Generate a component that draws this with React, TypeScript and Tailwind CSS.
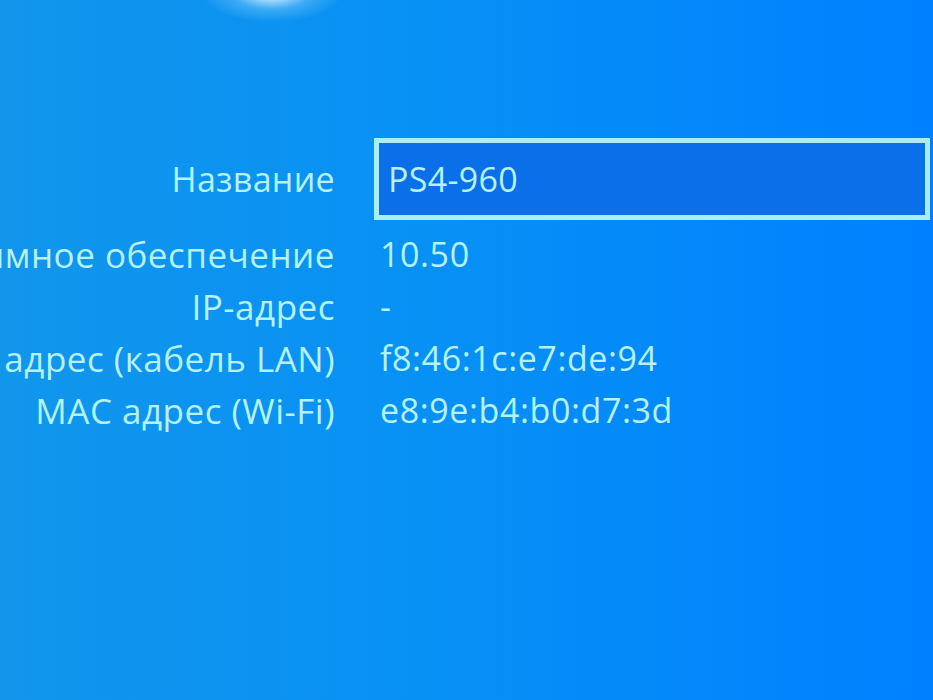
const rows = [
  { label: "Системное программное обеспечение", value: "10.50" },
  { label: "IP-адрес", value: "-" },
  { label: "MAC адрес (кабель LAN)", value: "f8:46:1c:e7:de:94" },
  { label: "MAC адрес (Wi-Fi)", value: "e8:9e:b4:b0:d7:3d" },
];

export default function App() {
  return (
    <div
      className="w-[933px] h-[700px] overflow-hidden text-[#b4f2f6] leading-none bg-[radial-gradient(ellipse_70px_28px_at_272px_-6px,rgba(240,252,255,0.95),rgba(150,215,250,0.35)_55%,rgba(0,0,0,0)_100%),linear-gradient(to_right,#1296ec_0%,#0891f5_45%,#0080ff_100%)]"
      style={{ fontFamily: '"Open Sans", "Noto Sans", sans-serif' }}
    >
      <div className="pt-[138px] flex flex-col">
        {/* selected row */}
        <div className="flex h-[82px]">
          <div className="w-[335px] shrink-0 flex justify-end items-center whitespace-nowrap text-[34px] tracking-[0.3px]">
            Название
          </div>
          <div className="ml-[39px] w-[556px] shrink-0 flex items-center border-[5px] border-[#a7eff4] bg-[#0a6fe8] pl-[9px] text-[34px] tracking-[0.3px]">
            PS4-960
          </div>
        </div>
        <div className="mt-[8px] flex flex-col">
          {rows.map((r) => (
            <div key={r.label} className="flex h-[52px]">
              <div className="w-[335px] shrink-0 flex justify-end items-center whitespace-nowrap text-[35px] tracking-[0.5px]">
                {r.label}
              </div>
              <div className="ml-[45px] flex items-center whitespace-nowrap text-[34px] tracking-[0.6px]">
                {r.value}
              </div>
            </div>
          ))}
        </div>
      </div>
    </div>
  );
}
